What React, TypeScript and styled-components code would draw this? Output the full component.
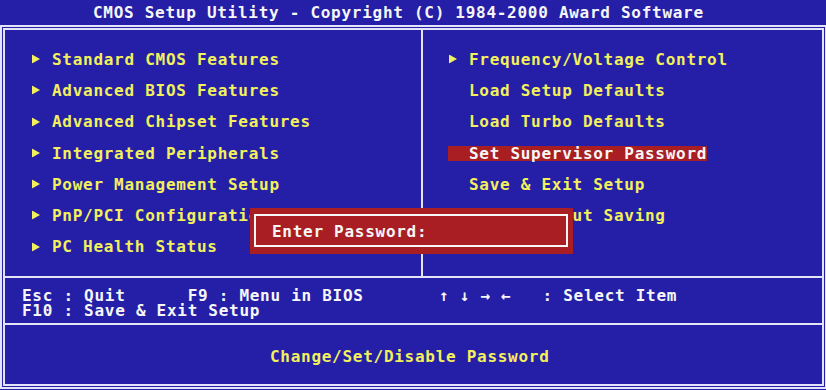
import React from "react";
import styled, { createGlobalStyle } from "styled-components";

const BLUE = "#241fa6";
const LINE = "#e4e4f8";
const YELLOW = "#f2f05c";
const WHITE = "#f6f6f6";
const RED = "#a81e22";

const Global = createGlobalStyle`
  html, body { margin: 0; padding: 0; background: ${BLUE}; overflow: hidden; }
  #root { width: 826px; height: 390px; }
`;

const Screen = styled.div`
  position: relative;
  width: 826px;
  height: 390px;
  overflow: hidden;
  background: ${BLUE};
  font-family: "DejaVu Sans Mono", "Liberation Mono", monospace;
  font-weight: bold;
  font-size: 16px;
  letter-spacing: 0.72px;
  line-height: 15.6px;
  white-space: pre;
`;

const TitleBar = styled.div`
  height: 25px;
  box-sizing: border-box;
  padding: 4.7px 0 0 93px;
  color: ${WHITE};
`;

const OuterFrame = styled.div`
  width: 827px;
  height: 364px;
  box-sizing: border-box;
  border: 2px solid ${LINE};
  padding: 1px;
`;

const InnerFrame = styled.div`
  height: 100%;
  box-sizing: border-box;
  border: 2px solid ${LINE};
  display: flex;
  flex-direction: column;
`;

const MenuArea = styled.div`
  height: 246px;
  display: grid;
  grid-template-columns: 416px 2px 1fr;
`;

const VRule = styled.div`
  background: ${LINE};
`;

const HRule = styled.div`
  height: 2px;
  flex: none;
  background: ${LINE};
`;

const MenuColumn = styled.div<{ $pad: number }>`
  display: flex;
  flex-direction: column;
  align-items: flex-start;
  gap: 15.7px;
  padding: 21.66px 0 0 ${(p) => p.$pad}px;
`;

const Item = styled.div<{ $selected?: boolean }>`
  display: inline-flex;
  align-items: center;
  height: 15.6px;
  color: ${(p) => (p.$selected ? WHITE : YELLOW)};
  background: ${(p) => (p.$selected ? RED : "transparent")};
`;

const Marker = styled.span`
  width: 21px;
  height: 15.6px;
  flex: none;
  display: flex;
  align-items: center;
  padding-left: 1px;
  box-sizing: border-box;
  svg {
    display: block;
    transform: translateY(-0.6px);
  }
`;

const KeysArea = styled.div`
  height: 45px;
  flex: none;
  box-sizing: border-box;
  padding: 9.5px 0 0 17px;
  display: grid;
  grid-template-columns: 417px 1fr;
  grid-auto-rows: 15.6px;
  color: ${WHITE};
`;

const HelpArea = styled.div`
  flex: 1;
  box-sizing: border-box;
  padding: 23.66px 0 0 265px;
  color: ${YELLOW};
`;

const Dialog = styled.div`
  position: absolute;
  left: 250px;
  top: 208px;
  width: 323px;
  height: 46px;
  background: ${RED};
  padding: 6px 5px 7px 4px;
  box-sizing: border-box;
`;

const DialogBox = styled.div`
  height: 100%;
  box-sizing: border-box;
  border: 2px solid ${WHITE};
  padding: 7.66px 0 0 16px;
  color: ${WHITE};
`;

const Triangle = () => (
  <svg width="8" height="9" viewBox="0 0 8 9">
    <polygon points="0,0 8,4.5 0,9" fill={YELLOW} />
  </svg>
);

type Entry = { label: string; sub?: boolean; selected?: boolean };

const left: Entry[] = [
  { label: "Standard CMOS Features", sub: true },
  { label: "Advanced BIOS Features", sub: true },
  { label: "Advanced Chipset Features", sub: true },
  { label: "Integrated Peripherals", sub: true },
  { label: "Power Management Setup", sub: true },
  { label: "PnP/PCI Configuration Setup", sub: true },
  { label: "PC Health Status", sub: true },
];

const right: Entry[] = [
  { label: "Frequency/Voltage Control", sub: true },
  { label: "Load Setup Defaults" },
  { label: "Load Turbo Defaults" },
  { label: "Set Supervisor Password", selected: true },
  { label: "Save & Exit Setup" },
  { label: "Exit Without Saving" },
];

const renderItems = (entries: Entry[]) =>
  entries.map((e) => (
    <Item key={e.label} $selected={e.selected}>
      <Marker>{e.sub ? <Triangle /> : null}</Marker>
      <span>{e.label}</span>
    </Item>
  ));

export default function App() {
  return (
    <Screen>
      <Global />
      <TitleBar>CMOS Setup Utility - Copyright (C) 1984-2000 Award Software</TitleBar>
      <OuterFrame>
        <InnerFrame>
          <MenuArea>
            <MenuColumn $pad={26}>{renderItems(left)}</MenuColumn>
            <VRule />
            <MenuColumn $pad={25}>{renderItems(right)}</MenuColumn>
          </MenuArea>
          <HRule />
          <KeysArea>
            <span>{"Esc : Quit      F9 : Menu in BIOS"}</span>
            <span>{"↑ ↓ → ←   : Select Item"}</span>
            <span>{"F10 : Save & Exit Setup"}</span>
          </KeysArea>
          <HRule />
          <HelpArea>Change/Set/Disable Password</HelpArea>
        </InnerFrame>
      </OuterFrame>
      <Dialog>
        <DialogBox>Enter Password:</DialogBox>
      </Dialog>
    </Screen>
  );
}
